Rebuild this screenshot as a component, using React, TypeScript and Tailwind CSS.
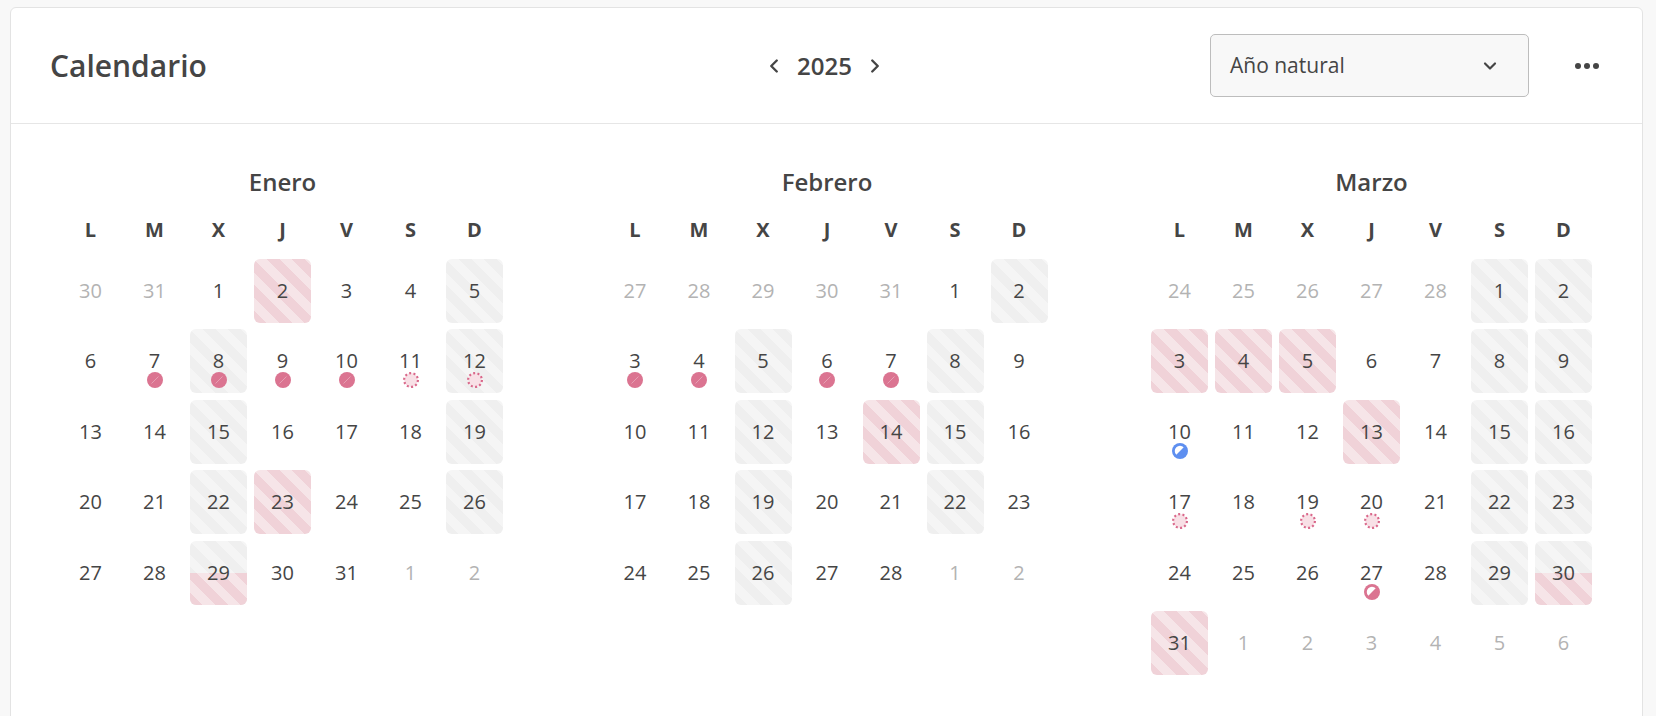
import { ChevronDown, ChevronLeft, ChevronRight } from 'lucide-react';

type Fill = 'none' | 'gray' | 'pink' | 'half';
type Mark = 'none' | 'solid' | 'dashed' | 'halfBlue' | 'halfPink';

interface Day {
  n: number;
  muted?: boolean;
  fill?: Fill;
  mark?: Mark;
}

interface Month {
  name: string;
  days: Day[];
}

const WEEKDAYS = ['L', 'M', 'X', 'J', 'V', 'S', 'D'];

// builds a month list from a compact description
function build(prev: number[], count: number, next: number[], fills: Record<number, Fill>, marks: Record<number, Mark>): Day[] {
  const out: Day[] = prev.map((n) => ({ n, muted: true }));
  for (let i = 1; i <= count; i++) {
    out.push({ n: i, fill: fills[i] || 'none', mark: marks[i] || 'none' });
  }
  next.forEach((n) => out.push({ n, muted: true }));
  return out;
}

const months: Month[] = [
  {
    name: 'Enero',
    days: build(
      [30, 31],
      31,
      [1, 2],
      { 2: 'pink', 5: 'gray', 8: 'gray', 12: 'gray', 15: 'gray', 19: 'gray', 22: 'gray', 23: 'pink', 26: 'gray', 29: 'half' },
      { 7: 'solid', 8: 'solid', 9: 'solid', 10: 'solid', 11: 'dashed', 12: 'dashed' },
    ),
  },
  {
    name: 'Febrero',
    days: build(
      [27, 28, 29, 30, 31],
      28,
      [1, 2],
      { 2: 'gray', 5: 'gray', 8: 'gray', 12: 'gray', 14: 'pink', 15: 'gray', 19: 'gray', 22: 'gray', 26: 'gray' },
      { 3: 'solid', 4: 'solid', 6: 'solid', 7: 'solid' },
    ),
  },
  {
    name: 'Marzo',
    days: build(
      [24, 25, 26, 27, 28],
      31,
      [1, 2, 3, 4, 5, 6],
      { 1: 'gray', 2: 'gray', 3: 'pink', 4: 'pink', 5: 'pink', 8: 'gray', 9: 'gray', 13: 'pink', 15: 'gray', 16: 'gray', 22: 'gray', 23: 'gray', 29: 'gray', 30: 'half', 31: 'pink' },
      { 10: 'halfBlue', 17: 'dashed', 19: 'dashed', 20: 'dashed', 27: 'halfPink' },
    ),
  },
];

const GRAY_STRIPES = 'bg-[repeating-linear-gradient(45deg,#efefef_0_9px,#f5f5f5_9px_18px)]';
const PINK_STRIPES = 'bg-[repeating-linear-gradient(45deg,#f0d2d8_0_9px,#f6e5e8_9px_18px)]';

function Marker({ kind }: { kind: Mark }) {
  if (kind === 'solid') {
    return (
      <svg width="16" height="16" viewBox="0 0 16 16">
        <circle cx="8" cy="8" r="8" fill="#db7491" />
        <line x1="4.5" y1="11.5" x2="11.5" y2="4.5" stroke="#ffffff" strokeOpacity="0.45" strokeWidth="0.7" />
      </svg>
    );
  }
  if (kind === 'dashed') {
    return (
      <svg width="16" height="16" viewBox="0 0 16 16">
        <circle cx="8" cy="8" r="6.9" fill="#f8e0e6" stroke="#d9678a" strokeWidth="2.2" strokeDasharray="2 2.35" />
      </svg>
    );
  }
  if (kind === 'halfBlue' || kind === 'halfPink') {
    const c = kind === 'halfBlue' ? '#5e8ff0' : '#db7491';
    return (
      <svg width="16" height="16" viewBox="0 0 16 16">
        <circle cx="8" cy="8" r="8" fill={c} />
        <path d="M4.3 11.7 A5.2 5.2 0 0 1 11.7 4.3 Z" fill="#ffffff" />
      </svg>
    );
  }
  return null;
}

function DayCell({ day }: { day: Day }) {
  const fill = day.fill || 'none';
  return (
    <div
      className={`relative h-[64px] rounded-[6px] overflow-hidden flex items-center justify-center ${
        fill === 'gray' || fill === 'half' ? GRAY_STRIPES : fill === 'pink' ? PINK_STRIPES : ''
      }`}
    >
      {fill === 'half' && <div className={`absolute left-0 right-0 bottom-0 h-1/2 ${PINK_STRIPES}`} />}
      <span className={`relative text-[20px] leading-none ${day.muted ? 'text-[#b3b3b3]' : 'text-[#454545]'}`}>{day.n}</span>
      {day.mark && day.mark !== 'none' && (
        <div className="absolute bottom-[5px] left-1/2 -translate-x-1/2 flex">
          <Marker kind={day.mark} />
        </div>
      )}
    </div>
  );
}

function MonthView({ month }: { month: Month }) {
  return (
    <div className="w-[441px]">
      <h2 className="text-center text-[24px] leading-[28px] font-semibold text-[#454545]">{month.name}</h2>
      <div className="mt-[22px] grid grid-cols-[repeat(7,57px)] gap-x-[7px]">
        {WEEKDAYS.map((w) => (
          <div key={w} className="text-center text-[20px] leading-[24px] font-bold text-[#454545]">
            {w}
          </div>
        ))}
      </div>
      <div className="mt-[17px] grid grid-cols-[repeat(7,57px)] gap-x-[7px] gap-y-[6.4px]">
        {month.days.map((d, i) => (
          <DayCell key={i} day={d} />
        ))}
      </div>
    </div>
  );
}

export default function App() {
  return (
    <div className="min-h-screen bg-[#f8f8f8] pl-[10px] pr-[13px] pt-[7px] font-['Open_Sans',sans-serif] overflow-hidden h-[716px]">
      <div className="bg-white border border-[#e3e3e3] rounded-[6px] min-h-[760px]">
        {/* Header */}
        <div className="h-[116px] border-b border-[#e6e6e6] grid grid-cols-[1fr_auto_1fr] items-center pl-[39px] pr-[43px]">
          <h1 className="text-[30px] font-semibold text-[#454545] leading-none">Calendario</h1>
          <div className="flex items-center gap-[12px] text-[#454545]">
            <ChevronLeft className="h-[22px] w-[22px]" strokeWidth={2.6} />
            <span className="text-[24px] font-semibold leading-none">2025</span>
            <ChevronRight className="h-[22px] w-[22px]" strokeWidth={2.6} />
          </div>
          <div className="flex items-center justify-end gap-[46px]">
            <div className="w-[319px] h-[63px] rounded-[5px] border border-[#bdbdbd] bg-[#f8f8f8] flex items-center justify-between pl-[19px] pr-[28px]">
              <span className="text-[21px] text-[#454545]">Año natural</span>
              <ChevronDown className="h-[20px] w-[20px] text-[#454545]" strokeWidth={2.6} />
            </div>
            <div className="flex items-center gap-[3px]">
              <span className="w-[6px] h-[6px] rounded-full bg-[#454545]" />
              <span className="w-[6px] h-[6px] rounded-full bg-[#454545]" />
              <span className="w-[6px] h-[6px] rounded-full bg-[#454545]" />
            </div>
          </div>
        </div>

        {/* Months */}
        <div className="flex justify-between pl-[51px] pr-[50px] pt-[44px] pb-[60px]">
          {months.map((m) => (
            <MonthView key={m.name} month={m} />
          ))}
        </div>
      </div>
    </div>
  );
}
